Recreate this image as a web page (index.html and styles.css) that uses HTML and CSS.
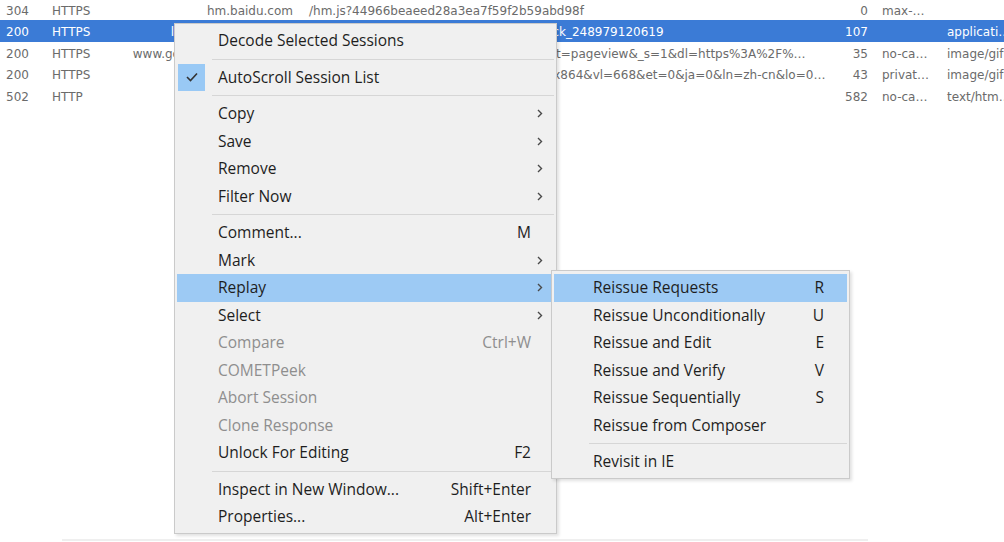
FILE: index.html
```html
<!DOCTYPE html>
<html>
<head>
<meta charset="utf-8">
<link rel="stylesheet" href="styles.css">
</head>
<body>
<div class="page">
  <div class="sessions">
    <div class="row"><span class="c-res">304</span><span class="c-proto">HTTPS</span><span class="c-host">hm.baidu.com</span><span class="c-url">/hm.js?44966beaeed28a3ea7f59f2b59abd98f</span><span class="c-body">0</span><span class="c-cache">max-…</span><span class="c-type"></span></div>
    <div class="row selected"><span class="c-res">200</span><span class="c-proto">HTTPS</span><span class="c-host">lpassport.baidu.com</span><span class="c-url">/su?wd=fiddler&amp;cb=jQuery11020_callback_248979120619</span><span class="c-body">107</span><span class="c-cache"></span><span class="c-type">applicati…</span></div>
    <div class="row"><span class="c-res">200</span><span class="c-proto">HTTPS</span><span class="c-host">www.google-analytics.com</span><span class="c-url">/r/collect?v=1&amp;_v=j96&amp;a=1234567890&amp;t=pageview&amp;_s=1&amp;dl=https%3A%2F%…</span><span class="c-body">35</span><span class="c-cache">no-ca…</span><span class="c-type">image/gif</span></div>
    <div class="row"><span class="c-res">200</span><span class="c-proto">HTTPS</span><span class="c-host">hm.baidu.com</span><span class="c-url">/hm.gif?cc=1&amp;ck=1&amp;cl=24bit&amp;ds=1536x864&amp;vl=668&amp;et=0&amp;ja=0&amp;ln=zh-cn&amp;lo=0…</span><span class="c-body">43</span><span class="c-cache">privat…</span><span class="c-type">image/gif</span></div>
    <div class="row"><span class="c-res">502</span><span class="c-proto">HTTP</span><span class="c-host">localhost</span><span class="c-url">/favicon.ico</span><span class="c-body">582</span><span class="c-cache">no-ca…</span><span class="c-type">text/htm…</span></div>
  </div>
  <div class="hscroll"></div>

  <ul class="menu main-menu">
    <li class="item"><span class="gutter"></span><span class="label">Decode Selected Sessions</span><span class="key"></span><span class="arrow"></span></li>
    <li class="sep"></li>
    <li class="item"><span class="gutter"><span class="checkbox"><svg width="14" height="12" viewBox="0 0 14 12"><polyline points="2,6 5.5,9.5 12,2.5" fill="none" stroke="#333" stroke-width="1.6"/></svg></span></span><span class="label">AutoScroll Session List</span><span class="key"></span><span class="arrow"></span></li>
    <li class="sep"></li>
    <li class="item"><span class="gutter"></span><span class="label">Copy</span><span class="key"></span><span class="arrow"><svg width="6" height="9" viewBox="0 0 6 9"><polyline points="1,1 4.5,4.5 1,8" fill="none" stroke="#4a4a4a" stroke-width="1.4"/></svg></span></li>
    <li class="item"><span class="gutter"></span><span class="label">Save</span><span class="key"></span><span class="arrow"><svg width="6" height="9" viewBox="0 0 6 9"><polyline points="1,1 4.5,4.5 1,8" fill="none" stroke="#4a4a4a" stroke-width="1.4"/></svg></span></li>
    <li class="item"><span class="gutter"></span><span class="label">Remove</span><span class="key"></span><span class="arrow"><svg width="6" height="9" viewBox="0 0 6 9"><polyline points="1,1 4.5,4.5 1,8" fill="none" stroke="#4a4a4a" stroke-width="1.4"/></svg></span></li>
    <li class="item"><span class="gutter"></span><span class="label">Filter Now</span><span class="key"></span><span class="arrow"><svg width="6" height="9" viewBox="0 0 6 9"><polyline points="1,1 4.5,4.5 1,8" fill="none" stroke="#4a4a4a" stroke-width="1.4"/></svg></span></li>
    <li class="sep"></li>
    <li class="item"><span class="gutter"></span><span class="label">Comment...</span><span class="key">M</span><span class="arrow"></span></li>
    <li class="item"><span class="gutter"></span><span class="label">Mark</span><span class="key"></span><span class="arrow"><svg width="6" height="9" viewBox="0 0 6 9"><polyline points="1,1 4.5,4.5 1,8" fill="none" stroke="#4a4a4a" stroke-width="1.4"/></svg></span></li>
    <li class="item active has-sub"><span class="gutter"></span><span class="label">Replay</span><span class="key"></span><span class="arrow"><svg width="6" height="9" viewBox="0 0 6 9"><polyline points="1,1 4.5,4.5 1,8" fill="none" stroke="#4a4a4a" stroke-width="1.4"/></svg></span>
      <ul class="menu submenu">
        <li class="item active"><span class="gutter"></span><span class="label">Reissue Requests</span><span class="key">R</span><span class="arrow"></span></li>
        <li class="item"><span class="gutter"></span><span class="label">Reissue Unconditionally</span><span class="key">U</span><span class="arrow"></span></li>
        <li class="item"><span class="gutter"></span><span class="label">Reissue and Edit</span><span class="key">E</span><span class="arrow"></span></li>
        <li class="item"><span class="gutter"></span><span class="label">Reissue and Verify</span><span class="key">V</span><span class="arrow"></span></li>
        <li class="item"><span class="gutter"></span><span class="label">Reissue Sequentially</span><span class="key">S</span><span class="arrow"></span></li>
        <li class="item"><span class="gutter"></span><span class="label">Reissue from Composer</span><span class="key"></span><span class="arrow"></span></li>
        <li class="sep"></li>
        <li class="item"><span class="gutter"></span><span class="label">Revisit in IE</span><span class="key"></span><span class="arrow"></span></li>
      </ul>
    </li>
    <li class="item"><span class="gutter"></span><span class="label">Select</span><span class="key"></span><span class="arrow"><svg width="6" height="9" viewBox="0 0 6 9"><polyline points="1,1 4.5,4.5 1,8" fill="none" stroke="#4a4a4a" stroke-width="1.4"/></svg></span></li>
    <li class="item disabled"><span class="gutter"></span><span class="label">Compare</span><span class="key">Ctrl+W</span><span class="arrow"></span></li>
    <li class="item disabled"><span class="gutter"></span><span class="label">COMETPeek</span><span class="key"></span><span class="arrow"></span></li>
    <li class="item disabled"><span class="gutter"></span><span class="label">Abort Session</span><span class="key"></span><span class="arrow"></span></li>
    <li class="item disabled"><span class="gutter"></span><span class="label">Clone Response</span><span class="key"></span><span class="arrow"></span></li>
    <li class="item"><span class="gutter"></span><span class="label">Unlock For Editing</span><span class="key">F2</span><span class="arrow"></span></li>
    <li class="sep"></li>
    <li class="item"><span class="gutter"></span><span class="label">Inspect in New Window...</span><span class="key">Shift+Enter</span><span class="arrow"></span></li>
    <li class="item"><span class="gutter"></span><span class="label">Properties...</span><span class="key">Alt+Enter</span><span class="arrow"></span></li>
  </ul>
</div>
</body>
</html>
```

FILE: styles.css
```css
html, body {
  margin: 0;
  padding: 0;
  background: #ffffff;
}

.page {
  position: relative;
  width: 1004px;
  height: 542px;
  overflow: hidden;
  display: flex;
  flex-direction: column;
  font-family: "DejaVu Sans", sans-serif;
  font-size: 12px;
  color: #6b6b6b;
}

.sessions {
  margin-top: -1.5px;
  display: flex;
  flex-direction: column;
}

.row {
  display: grid;
  grid-template-columns: 52px 76px 172px 528px 40px 67px 1fr;
  height: 21.5px;
  white-space: nowrap;
}

.row > span {
  overflow: hidden;
  box-sizing: border-box;
  padding-top: 3px;
  line-height: 18.5px;
}

.row.selected {
  background: #3b7bd6;
  color: #ffffff;
}

.c-res { padding-left: 6px; }
.c-host { text-align: right; padding-right: 7px; direction: rtl; }
.c-url { padding-left: 9px; }
.c-body { text-align: right; }
.c-cache { padding-left: 14px; }
.c-type { padding-left: 12px; }

.hscroll {
  margin-top: auto;
  margin-left: 62px;
  width: 806px;
  height: 2px;
  margin-bottom: 1px;
  background: #efefef;
}

/* Context menu */
.menu {
  list-style: none;
  margin: 0;
  background: #f0f0f0;
  border: 1px solid #cacaca;
  box-shadow: 2px 2px 3px rgba(0, 0, 0, 0.12);
  font-family: "Open Sans", "Noto Sans", sans-serif;
  font-size: 15.5px;
  color: #1e1e1e;
  box-sizing: border-box;
}

.main-menu {
  position: absolute;
  left: 174px;
  top: 23px;
  width: 383px;
  padding: 3px 0 2px;
}

.submenu {
  position: absolute;
  top: -4px;
  left: calc(100% - 3px);
  width: 299px;
  padding: 3px 0 2px;
  z-index: 2;
}

.item {
  display: flex;
  align-items: center;
  height: 27.5px;
  box-sizing: border-box;
  padding-bottom: 1px;
  margin: 0 2px;
  white-space: nowrap;
}

.has-sub {
  position: relative;
}

.item.active {
  background: #9dcaf4;
}

.item.disabled {
  color: #8e8e8e;
}

.gutter {
  flex: none;
  width: 41px;
  align-self: stretch;
  margin-bottom: -1px;
  display: flex;
  align-items: center;
}

.submenu .gutter {
  width: 39px;
}

.checkbox {
  width: 27px;
  height: 27px;
  margin-left: 1px;
  background: #99c9f5;
  display: flex;
  align-items: center;
  justify-content: center;
}

.label {
  flex: 1;
}

.key {
  flex: none;
  text-align: right;
}

.arrow {
  flex: none;
  width: 23px;
  box-sizing: border-box;
  padding-left: 6px;
  padding-top: 1px;
  display: flex;
  align-items: center;
}

.sep {
  height: 1px;
  margin: 4px 2px 4px 37px;
  background: #d6d6d6;
}
```
